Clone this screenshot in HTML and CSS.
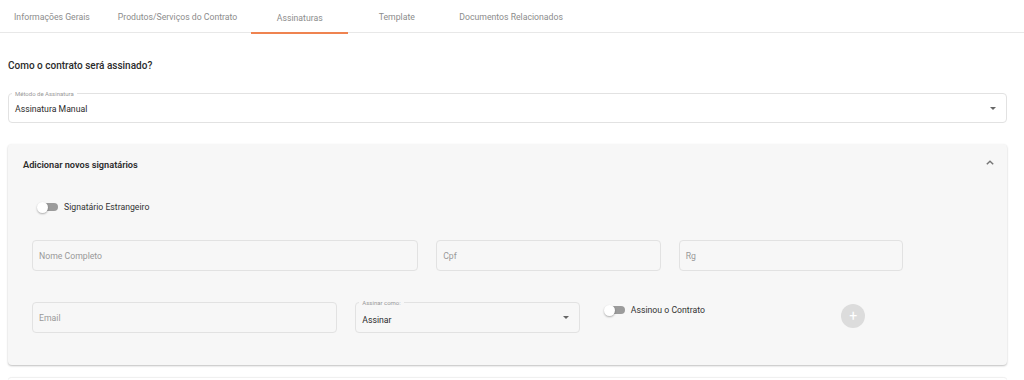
FILE: index.html
```html
<!DOCTYPE html>
<html lang="pt-BR">

<head>
  <meta charset="UTF-8" />
  <meta name="viewport" content="width=device-width, initial-scale=1.0" />
  <title>Contrato - Assinaturas</title>
  <link rel="stylesheet" href="styles.css">
</head>

<body>
  <!-- Tabs -->
  <nav class="tabs">
    <a class="tab">Informações Gerais</a>
    <a class="tab">Produtos/Serviços do Contrato</a>
    <a class="tab active">Assinaturas</a>
    <a class="tab">Template</a>
    <a class="tab">Documentos Relacionados</a>
  </nav>

  <main class="content">
    <h3 class="question">Como o contrato será assinado?</h3>

    <div class="field field-select method">
      <span class="field-label">Método de Assinatura</span>
      <span class="field-value">Assinatura Manual</span>
      <span class="caret"></span>
    </div>

    <!-- Signers panel -->
    <section class="panel">
      <header class="panel-head">
        <h4>Adicionar novos signatários</h4>
        <svg class="chevron" width="8" height="5" viewBox="0 0 8 5">
          <path d="M0.8 4.2 L4 1.2 L7.2 4.2" fill="none" stroke="#777" stroke-width="1.5" />
        </svg>
      </header>

      <div class="panel-body">
        <label class="switch foreign">
          <span class="switch-track"><span class="switch-thumb"></span></span>
          Signatário Estrangeiro
        </label>

        <div class="form-grid">
          <div class="field span-5"><span class="placeholder">Nome Completo</span></div>
          <div class="field span-3"><span class="placeholder">Cpf</span></div>
          <div class="field span-3"><span class="placeholder">Rg</span></div>
        </div>

        <div class="form-grid second">
          <div class="field span-4"><span class="placeholder">Email</span></div>
          <div class="field field-select span-3">
            <span class="field-label">Assinar como:</span>
            <span class="field-value">Assinar</span>
            <span class="caret"></span>
          </div>
          <div class="span-3 cell-switch">
            <label class="switch">
              <span class="switch-track"><span class="switch-thumb"></span></span>
              Assinou o Contrato
            </label>
          </div>
          <div class="cell-add">
            <button class="add-btn" disabled>+</button>
          </div>
        </div>
      </div>
    </section>

    <div class="panel panel-next"></div>
  </main>
</body>

</html>
```

FILE: styles.css
```css
:root {
  --accent: #ef8350;
  --muted: #8c8c8c;
  --border: #e2e2e2;
  --panel: #f7f7f7;
}

body {
  font-family: Roboto, 'Liberation Sans', sans-serif;
  margin: 0;
  background: #fff;
  color: #333;
  overflow: hidden;
}

/* Tabs */
.tabs {
  display: flex;
  height: 32px;
  border-bottom: 1px solid #e8e8e8;
}

.tab {
  display: flex;
  align-items: center;
  justify-content: center;
  min-width: 97px;
  padding: 2px 14px 0;
  box-sizing: border-box;
  font-size: 8.7px;
  color: var(--muted);
  cursor: pointer;
}

.tab.active {
  border-bottom: 2px solid var(--accent);
  height: 34px;
  padding-top: 4px;
}

/* Content */
.content {
  padding: 0 17px 0 8px;
}

.question {
  margin: 26px 0 20px;
  font-size: 10px;
  line-height: 14px;
  font-weight: 500;
  color: #2b2b2b;
}

.field {
  position: relative;
  display: flex;
  align-items: center;
  height: 31px;
  box-sizing: border-box;
  border: 1px solid var(--border);
  border-radius: 4px;
  padding: 0 10px 0 6px;
}

.field.method {
  height: 30px;
  background: #fff;
}

.field-label {
  position: absolute;
  top: -4px;
  left: 3px;
  padding: 0 3px;
  font-size: 6px;
  line-height: 7px;
  color: #999;
  background: var(--panel);
}

.method .field-label {
  background: #fff;
}

.field-value {
  font-size: 8.7px;
  color: #2b2b2b;
}

.field-select .field-value {
  padding-top: 4px;
}

.method .field-value {
  padding-top: 2px;
}

.caret {
  margin-left: auto;
  width: 0;
  height: 0;
  border-left: 3px solid transparent;
  border-right: 3px solid transparent;
  border-top: 3.5px solid #666;
}

.placeholder {
  font-size: 8.7px;
  color: #999;
}

/* Panel */
.panel {
  margin-top: 21px;
  background: var(--panel);
  border-radius: 4px;
  box-shadow: 0 1px 2px rgba(0, 0, 0, 0.25);
}

.panel-head {
  display: flex;
  align-items: center;
  justify-content: space-between;
  height: 40px;
  padding: 0 13px 0 15px;
}

.panel-head h4 {
  margin: 0;
  font-size: 9.2px;
  font-weight: 600;
  color: #2b2b2b;
}

.chevron {
  margin-top: -3px;
}

.panel-body {
  padding: 16px 23px 32px 24px;
}

.switch {
  display: flex;
  align-items: center;
  gap: 6px;
  font-size: 8.7px;
  line-height: 14px;
  color: #333;
}

.switch.foreign {
  margin-left: 5px;
}

.switch-track {
  position: relative;
  width: 16px;
  height: 8px;
  margin-left: 5px;
  border-radius: 4px;
  background: #9b9b9b;
}

.switch-thumb {
  position: absolute;
  left: -5px;
  top: -1.5px;
  width: 11px;
  height: 11px;
  border-radius: 50%;
  background: #fff;
  box-shadow: 0 1px 2px rgba(0, 0, 0, 0.3);
}

.form-grid {
  display: grid;
  grid-template-columns: repeat(12, 1fr);
  column-gap: 18px;
  margin-top: 26px;
}

.form-grid.second {
  margin-top: 31px;
}

.span-5 { grid-column: span 5; }
.span-4 { grid-column: span 4; }
.span-3 { grid-column: span 3; }

.cell-switch {
  padding: 1px 0 0 6px;
}

.cell-add {
  padding-top: 2px;
}

.add-btn {
  width: 24px;
  height: 24px;
  margin-left: 1px;
  border: none;
  border-radius: 50%;
  background: #dcdcdc;
  color: #fff;
  font-size: 14px;
  line-height: 24px;
  padding: 0;
  font-family: inherit;
}

.panel-next {
  margin-top: 12px;
  height: 20px;
  background: #fff;
  border-top: 1px solid #f0f0f0;
  box-shadow: 0 0 1px rgba(0, 0, 0, 0.08);
}
```
